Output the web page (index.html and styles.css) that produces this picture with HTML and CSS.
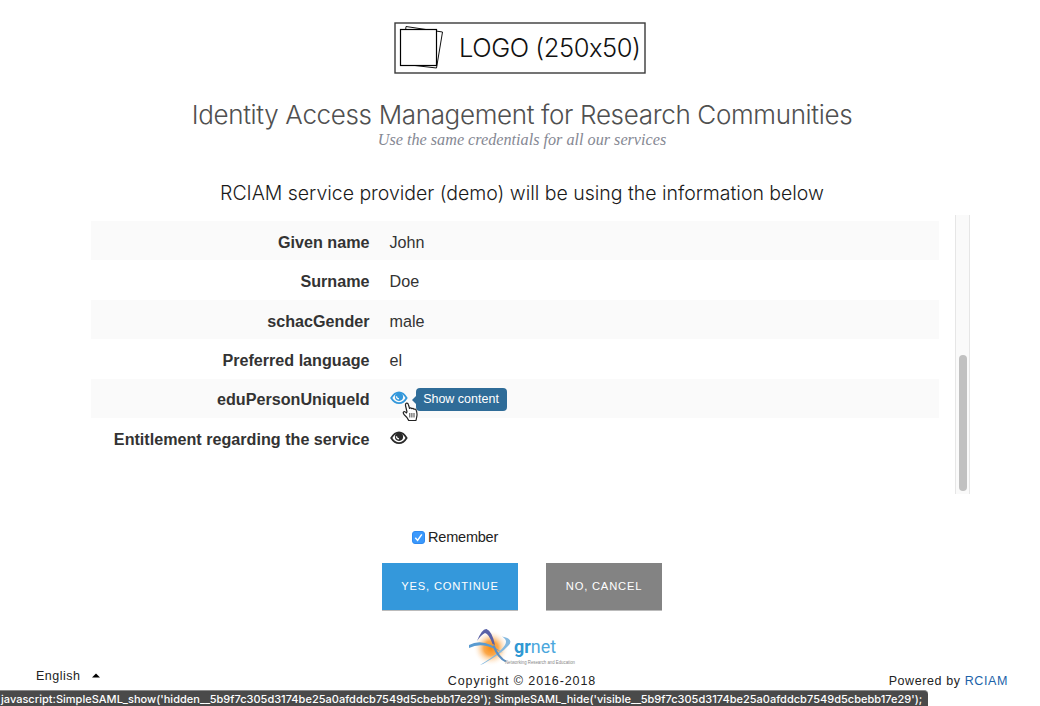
FILE: index.html
```
<!DOCTYPE html>
<html lang="en">
<head>
<meta charset="utf-8">
<title>Consent</title>
<link rel="stylesheet" href="styles.css">
</head>
<body>
<header class="header">
  <svg class="logo" width="252" height="52" viewBox="0 0 252 52">
    <rect x="1" y="1" width="250" height="50" fill="#fff" stroke="#3a3a3a" stroke-width="1.4"/>
    <path d="M12 4.500L48.500 10L42.500 46L8 42Z" fill="#fff" stroke="#111"/>
    <rect x="6.500" y="7.500" width="36" height="36" fill="#fff" stroke="#000" stroke-width="1.2"/>
    <text class="logo-text" x="65" y="35" textLength="182">LOGO (250x50)</text>
  </svg>
  <h1 class="title">Identity Access Management for Research Communities</h1>
  <p class="subtitle">Use the same credentials for all our services</p>
</header>
<main class="main">
  <h2 class="lead">RCIAM service provider (demo) will be using the information below</h2>
  <section class="scroll">
    <div class="rows">
      <div class="row"><b class="name">Given name</b><span class="value">John</span></div>
      <div class="row"><b class="name">Surname</b><span class="value">Doe</span></div>
      <div class="row"><b class="name">schacGender</b><span class="value">male</span></div>
      <div class="row"><b class="name">Preferred language</b><span class="value">el</span></div>
      <div class="row"><b class="name">eduPersonUniqueId</b><span class="value"><svg class="eye active" width="18" height="14" viewBox="0 0 18 14"><use href="#eye"/></svg>
        <span class="tooltip">Show content</span>
        <svg class="cursor" width="17" height="20" viewBox="0 0 17 20"><path d="M5 10L3.500 3.500Q3.200 1.500 4.700 1.200Q6 1 6.500 3L7.600 6.500Q8.500 5.300 9.800 6.700Q11 5.700 12 7.300Q13.700 6.600 14.300 8.500Q15.500 12 14.700 15L14 18.500L6.700 18.500Q5.500 15.500 2.500 13Q.7 11.300 1.500 10Q2.800 9 4.300 11Z" fill="#fff" stroke="#222" stroke-width="1.2" stroke-linejoin="round"/><path d="M7.800 11V15.500M9.900 11V15.500M12 11V15.500" stroke="#444"/></svg></span></div>
      <div class="row"><b class="name">Entitlement regarding the service</b><span class="value"><svg class="eye" width="18" height="14" viewBox="0 0 18 14"><g id="eye"><path d="M1.200 7Q4.500 1.400 9 1.400T16.600 7Q13.500 12.200 9 12.200T1.200 7Z" fill="none" stroke="currentColor" stroke-width="1.800"/><circle cx="9" cy="5.800" r="4.100" fill="currentColor"/><path d="M6.400 5.200Q6.600 7.600 9 7.900" fill="none" stroke="#fafafa" stroke-width="1.300"/></g></svg></span></div>
    </div>
    <div class="track"><div class="thumb"></div></div>
  </section>
  <form class="form">
    <label class="remember"><svg width="13" height="13" viewBox="0 0 13 13"><rect x=".5" y=".5" width="12" height="12" rx="2.500" fill="#3b99fc" stroke="#2f8af0"/><path d="M3.300 6.800L5.600 9.400L9.800 3.400" fill="none" stroke="#fff" stroke-width="1.500"/></svg><span>Remember</span></label>
    <div class="buttons">
      <button type="button" class="btn yes">YES, CONTINUE</button>
      <button type="button" class="btn no">NO, CANCEL</button>
    </div>
  </form>
</main>
<footer class="footer">
  <div class="language"><span>English</span><svg width="8" height="5" viewBox="0 0 8 5"><path d="M0 4.500L4 .5L8 4.500Z"/></svg></div>
  <div class="center">
    <svg class="grnet" width="114" height="40" viewBox="0 0 114 40">
      <defs><radialGradient id="glow"><stop offset="0" stop-color="#f98b10"/><stop offset=".4" stop-color="#fba94e"/><stop offset="1" stop-color="#fff" stop-opacity="0"/></radialGradient></defs>
      <g transform="translate(4 0)">
        <circle cx="22" cy="21" r="18" fill="url(#glow)"/>
        <path d="M8 14Q13 1.500 17.500 2Q23 4 26 18L23.500 17Q20 7 16 6Q12 8 8 14Z" fill="#5961a7"/>
        <path d="M0 18Q10 12.500 22 18L34 26Q24 20 15 18.500Q7 17.500 0 21Z" fill="#5a9bd0"/>
        <path d="M33 9.500Q46 12 39 19Q33 26 14 37L11 38Q31 26 36 18Q39 13 33 9.500Z" fill="#83b8df"/>
        <path d="M25.500 18Q30 30 38 34L36 35Q28 31 23.500 19Z" fill="#5b8fc4"/>
      </g>
      <text class="brand" x="49" y="26" textLength="42" lengthAdjust="spacingAndGlyphs"><tspan class="brand-gr">gr</tspan>net</text>
      <text class="brand-sub" x="40" y="36.500" textLength="70" lengthAdjust="spacingAndGlyphs">Networking Research and Education</text>
    </svg>
    <span class="copyright">Copyright © 2016-2018</span>
  </div>
  <div class="powered">Powered by <a class="link">RCIAM</a></div>
</footer>
<div class="status">javascript:SimpleSAML_show('hidden__5b9f7c305d3174be25a0afddcb7549d5cbebb17e29'); SimpleSAML_hide('visible__5b9f7c305d3174be25a0afddcb7549d5cbebb17e29');</div>
</body>
</html>
```
FILE: styles.css
```
* { box-sizing: border-box; }
body {
  margin: 0;
  width: 1040px;
  height: 706px;
  overflow: hidden;
  background: #fff;
  color: #333;
  font-family: "Liberation Sans", Arial, sans-serif;
  white-space: nowrap;
  display: flex;
  flex-direction: column;
}
.header { height: 175px; padding-top: 22px; display: flex; flex-direction: column; align-items: center; }
.logo { display: block; flex: none; }
.logo-text { font: 300 25.5px Inter, sans-serif; font-feature-settings: "calt" 0; fill: #111; }
.title { margin: 22px 0 0 4px; font: 300 26px/37px Inter, sans-serif; letter-spacing: -.34px; color: #505050; }
.subtitle { margin: -2px 0 0 4px; font: italic 16.2px/18px "Liberation Serif", serif; color: #858893; }
.main { height: 445px; flex: none; display: flex; flex-direction: column; align-items: center; }
.lead { margin: 4px 0 0 4px; height: 36px; font: 300 19.5px/28px Inter, sans-serif; letter-spacing: -.02px; color: #1a1a1a; }
.scroll { width: 879px; height: 279px; margin-left: 20px; flex: none; display: flex; justify-content: space-between; }
.rows { width: 848px; padding-top: 6px; }
.row { height: 39.4px; display: grid; grid-template-columns: 279px 1fr; column-gap: 20px; align-items: center; font-size: 16.15px; padding-top: 3.2px; }
.row:nth-child(odd) { background: #fafafa; }
.name { text-align: right; }
.value { display: flex; align-items: center; position: relative; }
.eye { margin-top: -3px; color: #2a2a2a; }
.active { color: #3498db; }
.tooltip { position: absolute; left: 26px; top: -6px; width: 91px; height: 23px; border-radius: 4px; background: #2f6c98; color: #fff; font-size: 12.5px; line-height: 23px; text-align: center; }
.tooltip::before { content: ""; position: absolute; left: -4px; top: 7px; border: 5px solid transparent; border-left: 0; border-right-color: #2f6c98; }
.cursor { position: absolute; left: 12px; top: 8px; }
.track { width: 15px; height: 279px; background: #fafafa; border: solid #e6e6e6; border-width: 0 1px; padding: 140px 0 0 3px; }
.thumb { width: 8px; height: 136px; border-radius: 4px; background: #c1c1c1; }
.form { width: 280px; margin: 34px 0 0 4px; }
.remember { display: flex; align-items: center; gap: 3px; padding-left: 30px; height: 18px; font-size: 14.5px; letter-spacing: -.2px; color: #222; }
.buttons { display: flex; gap: 28px; margin-top: 17px; }
.btn { border: 0; border-bottom: 1px solid #bbb; border-radius: 0; padding: 0 0 2px; height: 48px; color: #fff; font: 11.2px "Liberation Sans", Arial, sans-serif; letter-spacing: .8px; }
.yes { width: 136px; background: #3498db; }
.no { width: 116px; background: #838383; }
.footer { height: 70px; flex: none; display: grid; grid-template-columns: 1fr 150px 1fr; padding: 7px 32px 0 36px; font-size: 12.5px; letter-spacing: .9px; color: #222; }
.language { display: flex; align-items: center; gap: 11px; height: 15px; margin-top: 41px; letter-spacing: .5px; }
.center { display: flex; flex-direction: column; align-items: center; }
.grnet { display: block; letter-spacing: 0; }
.brand { font: 18.5px Roboto, sans-serif; fill: #4ba7dd; }
.brand-gr { font-weight: 700; fill: #2f98d3; }
.brand-sub { font: 4.6px "Liberation Sans", sans-serif; fill: #888; }
.copyright { margin-top: 7px; line-height: 15px; }
.powered { margin-top: 47px; line-height: 15px; text-align: right; letter-spacing: .6px; }
.link { color: #1b62a8; }
.status { width: 928px; height: 16px; flex: none; background: #4a4a4a; border-top: 1px solid #888; border-radius: 0 4px 0 0; color: #fff; font: 500 11px/16px Inter, sans-serif; letter-spacing: .02px; padding-left: 1px; }
```
